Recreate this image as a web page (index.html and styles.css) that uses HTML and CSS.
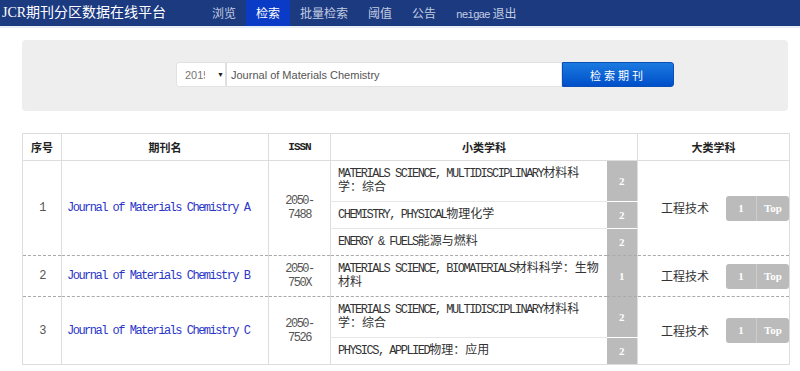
FILE: index.html
```html
<!DOCTYPE html>
<html lang="zh">
  <head>
    <meta charset="utf-8">
    <title>JCR期刊分区数据在线平台</title>
    <link rel="stylesheet" href="styles.css">
  </head>
  <body>
    <div class="navbar">
      <a class="brand">JCR期刊分区数据在线平台</a>
      <ul class="nav">
        <li>浏览</li>
        <li class="active">检索</li>
        <li>批量检索</li>
        <li>阈值</li>
        <li>公告</li>
        <li><span class="en">neigae</span> 退出</li>
      </ul>
    </div>
    <div class="container">
      <div class="jumbotron">
        <div class="searchGroup">
          <div class="yearSelect">
            <span class="yearText">2015</span>
            <span class="caret">▼</span>
          </div>
          <input class="searchInput" type="text" value="Journal of Materials Chemistry">
          <button class="searchButton" type="button">检索期刊</button>
        </div>
      </div>

      <table class="results">
        <colgroup>
          <col style="width: 39px">
          <col style="width: 207px">
          <col style="width: 62px">
          <col style="width: 276px">
          <col style="width: 31px">
          <col style="width: 152px">
        </colgroup>
        <thead>
          <tr>
            <th>序号</th>
            <th>期刊名</th>
            <th class="en">ISSN</th>
            <th colspan="2">小类学科</th>
            <th>大类学科</th>
          </tr>
        </thead>

        <!-- one tbody per journal -->
        <tbody class="journal">
          <tr>
            <td rowspan="3" class="num">1</td>
            <td rowspan="3" class="name"><a href="#">Journal of Materials Chemistry A</a></td>
            <td rowspan="3" class="issn">2050-<br>7488</td>
            <td class="subject">MATERIALS SCIENCE, MULTIDISCIPLINARY<span class="zh">材料科学：综合</span></td>
            <td class="rank">2</td>
            <td rowspan="3" class="major">
              <div class="majorInner">
                <span class="zh">工程技术</span>
                <span class="tags"><span>1</span><span>Top</span></span>
              </div>
            </td>
          </tr>
          <tr>
            <td class="subject">CHEMISTRY, PHYSICAL<span class="zh">物理化学</span></td>
            <td class="rank">2</td>
          </tr>
          <tr>
            <td class="subject">ENERGY &amp; FUELS<span class="zh">能源与燃料</span></td>
            <td class="rank">2</td>
          </tr>
        </tbody>

        <tbody class="journal">
          <tr>
            <td class="num">2</td>
            <td class="name"><a href="#">Journal of Materials Chemistry B</a></td>
            <td class="issn">2050-<br>750X</td>
            <td class="subject">MATERIALS SCIENCE, BIOMATERIALS<span class="zh">材料科学：生物材料</span></td>
            <td class="rank">1</td>
            <td class="major">
              <div class="majorInner">
                <span class="zh">工程技术</span>
                <span class="tags"><span>1</span><span>Top</span></span>
              </div>
            </td>
          </tr>
        </tbody>

        <tbody class="journal">
          <tr>
            <td rowspan="2" class="num">3</td>
            <td rowspan="2" class="name"><a href="#">Journal of Materials Chemistry C</a></td>
            <td rowspan="2" class="issn">2050-<br>7526</td>
            <td class="subject">MATERIALS SCIENCE, MULTIDISCIPLINARY<span class="zh">材料科学：综合</span></td>
            <td class="rank">2</td>
            <td rowspan="2" class="major">
              <div class="majorInner">
                <span class="zh">工程技术</span>
                <span class="tags"><span>1</span><span>Top</span></span>
              </div>
            </td>
          </tr>
          <tr>
            <td class="subject">PHYSICS, APPLIED<span class="zh">物理：应用</span></td>
            <td class="rank">2</td>
          </tr>
        </tbody>
      </table>
    </div>
  </body>
</html>
```

FILE: styles.css
```css
body {
  margin: 0;
  background-color: #fff;
  color: #333;
  font-family: "Liberation Mono", "Noto Sans CJK SC", monospace;
  font-size: 12px;
}
.zh {
  font-family: "Noto Sans CJK SC", sans-serif;
  letter-spacing: 0;
}
.en {
  font-family: "Liberation Mono", monospace;
}

/* top bar */
.navbar {
  display: flex;
  align-items: stretch;
  height: 26px;
  background-color: #1b3a80;
  border-bottom: 2px solid #e6eef8;
}
.brand {
  width: 200px;
  padding-left: 2px;
  color: #fff;
  font-family: "Liberation Serif", "Noto Sans CJK SC", serif;
  font-size: 14px;
  line-height: 26px;
}
.nav {
  display: flex;
  margin: 0;
  padding: 0;
  list-style: none;
}
.nav li {
  padding: 0 10px;
  color: #c3cce0;
  font-family: "Noto Sans CJK SC", sans-serif;
  font-size: 12px;
  line-height: 26px;
}
.nav li.active {
  background-color: #0a3bc6;
  color: #fff;
}
.nav .en {
  font-family: "Liberation Mono", monospace;
  font-size: 11px;
  letter-spacing: -1px;
}

.container {
  padding: 12px 0 0 22px;
}

/* search box */
.jumbotron {
  width: 766px;
  box-sizing: border-box;
  padding: 22px 0 24px 154px;
  background-color: #eee;
  border-radius: 4px;
}
.searchGroup {
  display: flex;
  height: 25px;
}
.yearSelect {
  display: flex;
  align-items: center;
  width: 50px;
  box-sizing: border-box;
  padding-left: 8px;
  background-color: #fff;
  border: 1px solid #e2e2e2;
  border-radius: 3px 0 0 3px;
  color: #777;
  font-family: "Liberation Sans", sans-serif;
  font-size: 11px;
}
.yearText {
  width: 20px;
  overflow: hidden;
  white-space: nowrap;
}
.caret {
  margin-left: 12px;
  color: #222;
  font-size: 7px;
}
.searchInput {
  width: 336px;
  height: 25px;
  box-sizing: border-box;
  margin: 0;
  padding: 0 4px;
  border: 1px solid #e2e2e2;
  border-left-color: #ddd;
  border-radius: 0;
  color: #555;
  font-family: "Liberation Sans", sans-serif;
  font-size: 11px;
  outline: none;
}
.searchButton {
  width: 112px;
  height: 25px;
  margin: 0;
  padding: 0;
  border: 1px solid #0a4fb5;
  border-radius: 0 3px 3px 0;
  background: linear-gradient(#1b7ae0, #004fc9);
  color: #fff;
  font-family: "Noto Sans CJK SC", sans-serif;
  font-size: 11px;
  letter-spacing: 3px;
}

/* results */
.results {
  width: 767px;
  margin-top: 22px;
  table-layout: fixed;
  border-collapse: collapse;
  border: 1px solid #ddd;
  letter-spacing: -1.5px;
}
.results .zh {
  line-height: 0;
}
.results th {
  height: 14px;
  padding: 6px 7px;
  border: 1px solid #ddd;
  color: #222;
  font-family: "Noto Sans CJK SC", sans-serif;
  font-size: 11px;
  font-weight: bold;
  line-height: 14px;
  letter-spacing: 0;
}
.results th.en {
  font-family: "Liberation Mono", monospace;
  letter-spacing: -1px;
}
.results td {
  padding: 6px 7px;
  border-left: 1px solid #ddd;
  line-height: 14px;
  vertical-align: middle;
}
.journal {
  border-bottom: 1px dashed #aaa;
}
.num,
.issn {
  text-align: center;
  color: #555;
}
.results td.name {
  padding-left: 5px;
}
.name a {
  color: #2a35c8;
  text-decoration: none;
}
.results td.subject {
  border-bottom: 1px solid #e6e6e6;
  color: #333;
}
.results td.rank {
  padding: 0;
  border-left: none;
  border-bottom: 1px solid #fff;
  background-color: #bbb;
  color: #fff;
  text-align: center;
  font-family: "Liberation Serif", serif;
  font-size: 11px;
  font-weight: bold;
  letter-spacing: 0;
}
.results tr:last-child td.subject,
.results tr:last-child td.rank {
  border-bottom: none;
}
.results td.major {
  padding: 0;
}
.majorInner {
  display: flex;
  align-items: center;
  justify-content: space-between;
  padding-left: 23px;
  color: #333;
}
.majorInner .zh {
  line-height: 14px;
}
.tags {
  display: flex;
  height: 25px;
}
.tags span {
  width: 30px;
  background-color: #bbb;
  color: #fff;
  text-align: center;
  font-family: "Liberation Serif", serif;
  font-size: 11px;
  font-weight: bold;
  line-height: 25px;
  letter-spacing: 0;
}
.tags span:first-child {
  border-radius: 3px 0 0 3px;
  border-right: 1px solid #ccc;
}
.tags span:last-child {
  width: 32px;
  border-radius: 0 3px 3px 0;
}
```
